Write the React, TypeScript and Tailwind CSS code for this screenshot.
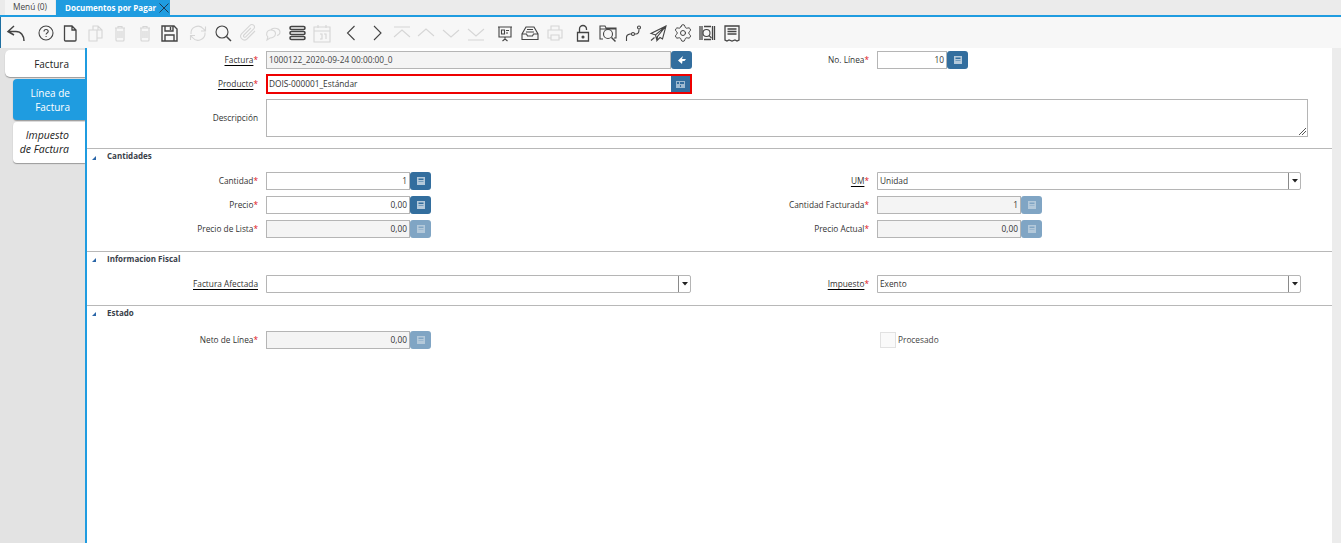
import { FC, ReactNode } from 'react'
import { Settings } from 'lucide-react'

const Ico: FC<{ dim?: boolean; children: ReactNode }> = ({ dim, children }) => (
  <svg width={24} height={24} viewBox="0 0 24 24" className={dim ? 'fill-none stroke-[#d6d6d6] stroke-[1.1]' : 'fill-none stroke-[#444] stroke-[1.1]'}>
    {children}
  </svg>
)

const toolbar = [
  { gap: 'ml-[3px]', el: <Ico><path d="M10 5 4 10.500l6 3.500M4 10.500h8c5 0 8 4 8 9.500" strokeWidth="1.500" /></Ico> },
  { gap: 'ml-[6px]', el: <Ico><circle cx="12" cy="12" r="7" /><path d="M10 10.500c0-2.600 4.200-2.600 4.200 0 0 1.600-2.100 1.500-2.100 3M12.100 15v1" /></Ico> },
  { gap: 'ml-[0px]', el: <Ico><path d="M6.500 5h7.500l4 4v10a1 1 0 0 1-1 1H7.500a1 1 0 0 1-1-1zM14 5v4h4" strokeWidth="1.300" /></Ico> },
  { gap: 'ml-[2px]', el: <Ico dim><path d="M5 9h8v11H5zM9 9V5h5l4 4v8h-5M14 5v4h4" /></Ico> },
  { gap: 'ml-[0px]', el: <Ico dim><path d="M7 7h10M10 7V5.500h4V7M8 7v12a1 1 0 0 0 1 1h6a1 1 0 0 0 1-1V7M10 10v7M12 10v7M14 10v7" /></Ico> },
  { gap: 'ml-[1px]', el: <Ico dim><path d="M7 7h10M10 7V5.500h4V7M8 7v12a1 1 0 0 0 1 1h6a1 1 0 0 0 1-1V7M10 10v7M12 10v7M14 10v7" /></Ico> },
  { gap: 'ml-[0px]', el: <Ico><path d="M5 5h12l3 3v12H5zM8 5v5h8V5M8 20v-6h9v6M13.500 6v3" strokeWidth="1.400" /></Ico> },
  { gap: 'ml-[5px]', el: <Ico dim><path d="M5 13a7 7 0 0 1 12.500-5l2 2M19.500 5.500V10H15M19 11.500a7 7 0 0 1-12.500 5l-2-2M4.500 19v-4.500H9" /></Ico> },
  { gap: 'ml-[1px]', el: <Ico><circle cx="11" cy="11" r="6" /><path d="m15.500 15.500 4.500 4.500" strokeWidth="1.500" /></Ico> },
  { gap: 'ml-[1px]', el: <Ico dim><path d="m19 10-8 8a3.800 3.800 0 0 1-5.500-5.200l8.500-8.500a2.500 2.500 0 0 1 3.700 3.500l-8 8a1.200 1.200 0 0 1-1.800-1.800l7-7" /></Ico> },
  { gap: 'ml-[1px]', el: <Ico dim><path d="M10 8.500c3.500-2.500 9-1 9 2.500 0 1.800-1 3-3 3.500M14.500 12.500c0 3-3 4.500-5.500 4.500l-3 2 .8-3c-2.500-2.500-.8-7 2.700-7s5 1.500 5 3.500z" /></Ico> },
  { gap: 'ml-[1px]', el: <Ico><rect x="4" y="5.500" width="15" height="3" rx="1.500" strokeWidth="1.600" /><rect x="4" y="10.500" width="15" height="3" rx="1.500" strokeWidth="1.600" /><rect x="4" y="15.500" width="15" height="3" rx="1.500" strokeWidth="1.600" /></Ico> },
  { gap: 'ml-[0px]', el: <Ico dim><path d="M4 6h16v15H4zM4 10h16M8 4v3M16 4v3M10 13h2v5h-2M14 13h2v5" /></Ico> },
  { gap: 'ml-[6px]', el: <Ico><path d="m14.500 5-7 7 7 7" /></Ico> },
  { gap: 'ml-[1px]', el: <Ico><path d="m9 5 7 7-7 7" /></Ico> },
  { gap: 'ml-[1px]', el: <Ico dim><path d="M4 6h16M4 16l8-7 8 7" /></Ico> },
  { gap: 'ml-[0px]', el: <Ico dim><path d="m4 15 8-7 8 7" /></Ico> },
  { gap: 'ml-[1px]', el: <Ico dim><path d="m4 9 8 7 8-7" /></Ico> },
  { gap: 'ml-[1px]', el: <Ico dim><path d="M4 19h16M4 8l8 7 8-7" /></Ico> },
  { gap: 'ml-[5px]', el: <Ico><path d="M5 6h14M6 6v10h12V6M12 16v2M9.500 20l2.500-2 2.500 2M8.500 9h3v4h-3zM13 9.500h3M13 12h2" /></Ico> },
  { gap: 'ml-[1px]', el: <Ico><path d="m8 6-4 7v5.500h16V13l-4-7zM4 13h4.500l1 2h5l1-2H20M9 8.500h6M8 11h8" /></Ico> },
  { gap: 'ml-[1px]', el: <Ico dim><path d="M8 9V5h8v4M8 17H5V9h14v8h-3M8 14h8v5H8z" /></Ico> },
  { gap: 'ml-[4px]', el: <Ico><path d="M8.500 11.500V8a3.500 3.500 0 0 1 7 0v1M6.500 11.500h11v8.500h-11z" strokeWidth="1.300" /><circle cx="12" cy="16" r="1" fill="#444" /></Ico> },
  { gap: 'ml-[1px]', el: <Ico><path d="M4 8V5h5l1 2h10v10h-2M4 8v10h3M4 8h16" /><circle cx="12" cy="13" r="4.500" /><path d="m15.500 16.500 4 4" strokeWidth="1.500" /></Ico> },
  { gap: 'ml-[1px]', el: <Ico><path d="M5.500 20v-4c0-2 1.500-2.500 3.500-3h6c2.500 0 3-1.500 3-4.500" /><circle cx="18" cy="6.500" r="1.500" /><circle cx="12" cy="13" r="1.500" className="fill-[#f7f7f7]" /></Ico> },
  { gap: 'ml-[1px]', el: <Ico><path d="M20 5 5 12.500l4.500 1.500L20 5l-8.500 10.500-.5 4 3-3 2.500 1.500zM9.500 14l1.500 5.500M5 19.500l3.500-3" /></Ico> },
  { gap: 'ml-[1px]', el: <Settings size={24} strokeWidth={1.200} className="p-[2px] text-[#444]" /> },
  { gap: 'ml-[0px]', el: <Ico><path d="M5 5v14M7 5v14M17.500 5v14M19.500 5v14M9 5.500h7M9 18.500h7" strokeWidth="1.300" /><circle cx="11.500" cy="12" r="3.500" /><path d="m14 14.500 2.500 2.500" /></Ico> },
  { gap: 'ml-[1px]', el: <Ico><path d="M5 5h14v14l-2 1-2-1-3 1-3-1-2 1-2-1zM7.500 8h9M7.500 10.500h9M7.500 13h9" strokeWidth="1.300" /></Ico> },
]

const Calc: FC<{ dim?: boolean; children?: ReactNode }> = ({ dim, children }) => (
  <span className={`flex h-[18px] w-[21px] shrink-0 items-center justify-center rounded-[3px] ${dim ? 'bg-[#80a5c4]' : 'bg-[#336e9e]'}`}>
    {children ?? (
      <svg width="8" height="8" viewBox="0 0 8 8" className="fill-[#b4c9da]">
        <path d="M0 0h8v8H0zM1.500 1.500v1.500h5V1.500zM1.500 4.500V5h5v-.5z" fillRule="evenodd" />
      </svg>
    )}
  </span>
)

const Label: FC<{ text: string; link?: boolean; req?: boolean }> = ({ text, link, req }) => (
  <span className="flex h-[18px] w-[171px] shrink-0 items-center justify-end text-[8.300px] text-[#333]">
    <span className={link ? 'underline decoration-black underline-offset-2' : ''}>{text}</span>
    {req && <span className="text-[#e01020]">*</span>}
  </span>
)

const NumField: FC<{ w: string; label: string; value: string; ro?: boolean }> = ({ w, label, value, ro }) => (
  <div className="flex items-center">
    <Label text={label} req />
    <span className={`ml-[8px] flex h-[18px] items-center justify-end border border-[#b5b5b5] pr-[2px] text-[8.300px] text-[#333] ${w} ${ro ? 'bg-[#f4f4f4]' : 'bg-white'}`}>
      {value}
    </span>
    <Calc dim={ro} />
  </div>
)

const ComboField: FC<{ label: string; value?: string; w: string; req?: boolean }> = ({ label, value, w, req }) => (
  <div className="flex items-center">
    <Label text={label} link req={req} />
    <span className={`ml-[8px] flex h-[18px] items-center rounded-r-[2px] border border-[#b5b5b5] bg-white pl-[2px] text-[8.300px] text-[#333] ${w}`}>
      {value}
      <span className="ml-auto flex h-full w-[12px] items-center justify-center border-l border-[#8a8a8a]">
        <svg width="6" height="4" viewBox="0 0 6 4" className="fill-[#222]"><path d="M0 0h6L3 3.500z" /></svg>
      </span>
    </span>
  </div>
)

const SectionHead: FC<{ title: string; className: string }> = ({ title, className }) => (
  <div className={`flex items-center border-t border-[#b8b8b8] ${className}`}>
    <svg width="4" height="4" viewBox="0 0 4 4" className="ml-[5px] mt-[3px] fill-[#2a66a8]"><path d="M4 0v4H0z" /></svg>
    <span className="ml-[11px] text-[8px] font-bold text-[#3a3f4a]">{title}</span>
  </div>
)

export default function App() {
  return (
    <div className="flex h-[543px] w-[1341px] flex-col overflow-hidden bg-white font-['Open_Sans',sans-serif]">
      <div className="flex h-[15px] shrink-0 items-end bg-[#ebebeb] pl-[5px]">
        <span className="flex h-[15px] w-[50px] items-center justify-center bg-[#f5f5f5] text-[8.300px] text-[#444]">Menú (0)</span>
        <span className="ml-[1px] flex h-[15px] w-[114px] items-center whitespace-nowrap bg-[#1f9ce0] pl-[9px] text-[8px] font-bold text-white">
          Documentos por Pagar
          <svg width="10" height="10" viewBox="0 0 10 10" className="ml-auto mr-[1px] stroke-[#1d3a55]"><path d="m0.500 0.500 9 9M9.500 0.500l-9 9" /></svg>
        </span>
      </div>
      <div className="h-[2px] shrink-0 bg-[#1f9ce0]" />
      <div className="flex h-[31px] shrink-0 items-center border-l border-[#1f6fa0] bg-[#f7f7f7]">
        {toolbar.map((t, i) => (
          <span key={i} className={t.gap}>{t.el}</span>
        ))}
      </div>
      <div className="flex min-h-0 flex-1">
        <aside className="flex w-[85px] shrink-0 flex-col items-end bg-[#e3e3e3] pt-[2px] text-[10px] text-[#222]">
          <div className="flex h-[27px] w-[80px] items-center justify-end rounded-l-[5px] bg-white pr-[16px] pt-[1px] shadow-[0_1px_1px_#999]">Factura</div>
          <div className="mt-[2px] flex h-[41px] w-[72px] flex-col items-end justify-center rounded-l-[4px] bg-[#1f9ce0] pr-[15px] leading-[14px] text-white shadow-[0_1px_1px_#999]">
            <span>Línea de</span><span>Factura</span>
          </div>
          <div className="mt-[2px] flex h-[41px] w-[72px] flex-col items-end justify-center rounded-l-[4px] bg-white pb-[2px] pr-[16px] text-[10.500px] italic leading-[14px] shadow-[0_1px_1px_#999]">
            <span>Impuesto</span><span>de Factura</span>
          </div>
        </aside>
        <div className="w-[2px] shrink-0 bg-[#1f9ce0]" />
        <main className="min-w-0 flex-1">
          <div className="flex items-center pt-[3px]">
            <Label text="Factura" link req />
            <span className="ml-[8px] flex h-[18px] w-[405px] items-center border border-[#b5b5b5] bg-[#f4f4f4] pl-[2px] text-[8.300px] text-[#444]">1000122_2020-09-24 00:00:00_0</span>
            <Calc>
              <svg width="8" height="8" viewBox="0 0 8 8" className="fill-white"><path d="M0 4.500 5 0 4 3h4L6.500 5H4.500L4 8z" /></svg>
            </Calc>
            <div className="ml-[6px]"><NumField w="w-[70px]" label="No. Línea" value="10" /></div>
          </div>
          <div className="mt-[5px] flex items-center">
            <Label text="Producto" link req />
            <span className="ml-[8px] flex h-[20px] w-[426px] items-center justify-between border-2 border-[#ee0000] pl-[1px] text-[8.300px] text-[#333]">
              DOIS-000001_Estándar
              <span className="flex h-full w-[19px] items-center justify-center bg-[#336e9e]">
                <svg width="9" height="7" viewBox="0 0 9 7" className="fill-[#9fbbd1]"><path d="M0 0h9v7H0zM1 1v2h2V1zM4 1v2h4V1zM4 4v2h1V4z" fillRule="evenodd" /></svg>
              </span>
            </span>
          </div>
          <div className="mt-[5px] flex items-center">
            <Label text="Descripción" />
            <span className="relative ml-[8px] h-[38px] w-[1042px] border border-[#b5b5b5]">
              <svg width="7" height="7" viewBox="0 0 7 7" className="absolute bottom-[1px] right-[1px] stroke-[#555]"><path d="M7 0 0 7M7 3 3 7" /></svg>
            </span>
          </div>
          <SectionHead title="Cantidades" className="mt-[11px] h-[15px]" />
          <div className="mt-[9px] flex">
            <div className="w-[611px]">
              <NumField w="w-[144px]" label="Cantidad" value="1" />
              <div className="mt-[6px]"><NumField w="w-[144px]" label="Precio" value="0,00" /></div>
              <div className="mt-[6px]"><NumField w="w-[144px]" label="Precio de Lista" value="0,00" ro /></div>
            </div>
            <div>
              <ComboField label="UM" value="Unidad" w="w-[424px]" req />
              <div className="mt-[6px]"><NumField w="w-[144px]" label="Cantidad Facturada" value="1" ro /></div>
              <div className="mt-[6px]"><NumField w="w-[144px]" label="Precio Actual" value="0,00" ro /></div>
            </div>
          </div>
          <SectionHead title="Informacion Fiscal" className="mt-[13px] h-[14px]" />
          <div className="mt-[10px] flex">
            <div className="w-[611px]"><ComboField label="Factura Afectada" w="w-[425px]" /></div>
            <ComboField label="Impuesto" value="Exento" w="w-[424px]" req />
          </div>
          <SectionHead title="Estado" className="mt-[12px] h-[14px]" />
          <div className="mt-[12px] flex">
            <div className="w-[611px]"><NumField w="w-[144px]" label="Neto de Línea" value="0,00" ro /></div>
            <div className="ml-[182px] flex h-[18px] items-center text-[8.300px] text-[#444]">
              <span className="h-[16px] w-[16px] border border-[#e2e2e2] bg-[#fafafa]" />
              <span className="ml-[2px]">Procesado</span>
            </div>
          </div>
        </main>
        <div className="w-[9px] shrink-0 bg-[#ececec]" />
      </div>
    </div>
  )
}
